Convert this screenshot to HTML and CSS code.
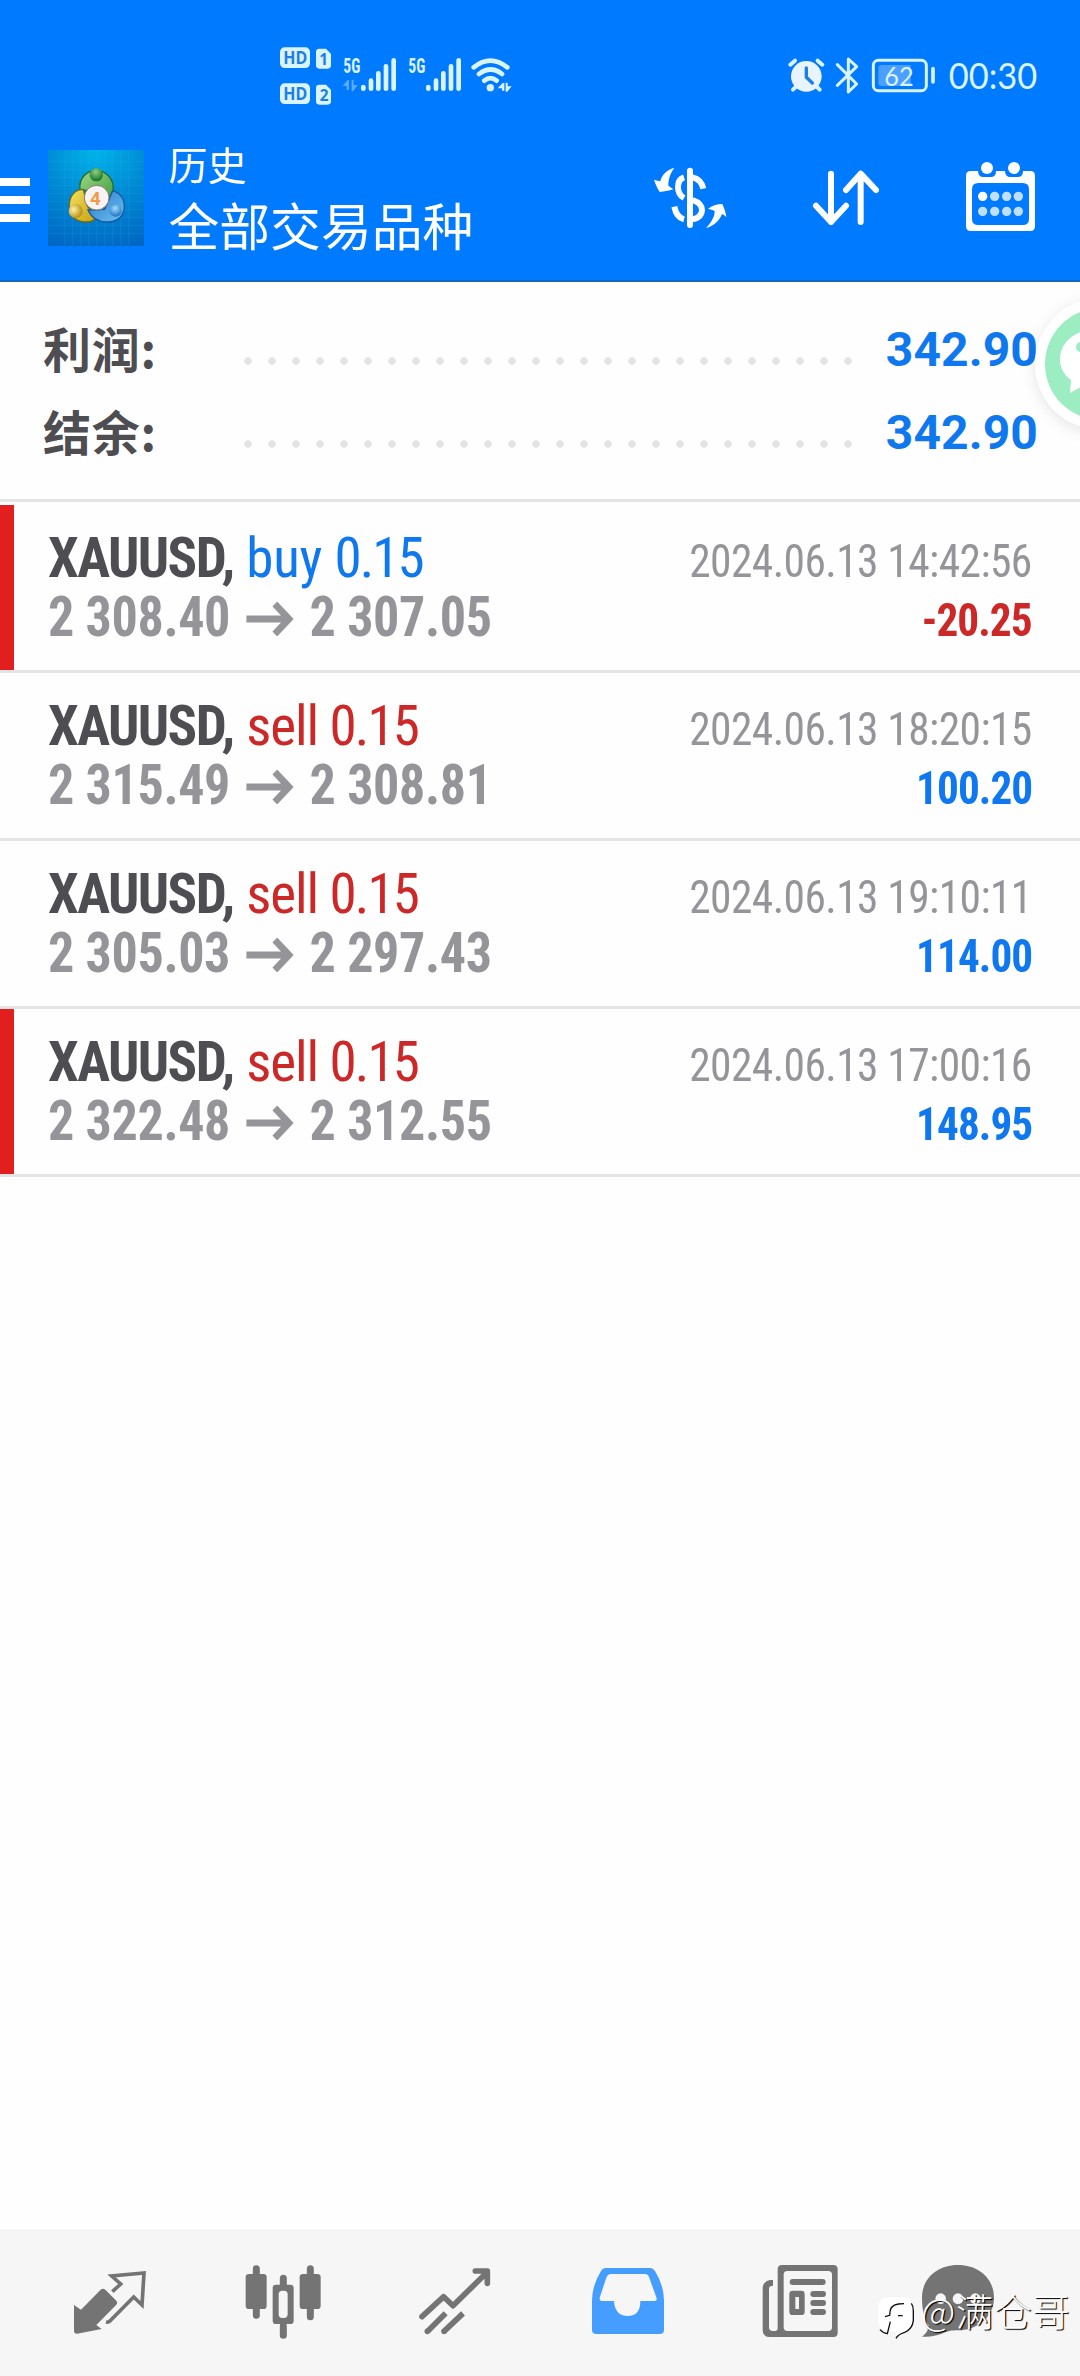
FILE: index.html
```html
<!DOCTYPE html>
<html lang="zh-CN">
<head>
<meta charset="utf-8">
<title>历史</title>
<link rel="stylesheet" href="styles.css">
</head>
<body>
<div class="screen">
  <header class="header">
    <div class="status">
      <svg class="status-left" viewBox="0 0 840 270" width="280" height="90">
        <g fill="#d9f3ff">
          <rect x="60" y="52" width="90" height="62" rx="14"/>
          <rect x="60" y="160" width="90" height="62" rx="14"/>
          <path d="M178 56h20l15 16v34q0 10-10 10h-25q-10 0-10-10V66q0-10 10-10z"/>
          <path d="M178 164h20l15 16v34q0 10-10 10h-25q-10 0-10-10v-40q0-10 10-10z"/>
        </g>
        <g class="hd" fill="#1b7fe6">
          <text x="70" y="103" textLength="72" lengthAdjust="spacingAndGlyphs">HD</text>
          <text x="70" y="211" textLength="72" lengthAdjust="spacingAndGlyphs">HD</text>
          <text class="sim" x="178" y="106">1</text>
          <text class="sim" x="179" y="213">2</text>
        </g>
        <g class="net" fill="#d9f3ff">
          <text x="250" y="128" textLength="51" lengthAdjust="spacingAndGlyphs">5G</text>
          <text x="445" y="128" textLength="51" lengthAdjust="spacingAndGlyphs">5G</text>
        </g>
        <path d="M248 168l15-18h4v30h-7v-12zM275 150h6v15h12l-14 19h-4z" fill="#5aaaff"/>
        <g stroke="#d9f3ff" stroke-width="14" stroke-linecap="round">
          <path d="M310 171v5M333 152v24M355 130v46M378 109v67M401 91v85"/>
          <path d="M505 171v5M528 152v24M550 130v46M573 109v67M596 91v85"/>
        </g>
        <g fill="none" stroke="#d9f3ff" stroke-width="14" stroke-linecap="round">
          <path d="M641 112q50-40 101 0M657 132q35-27 69 0M673 152q18-15 37 0"/>
        </g>
        <circle cx="691" cy="173" r="11" fill="#d9f3ff"/>
        <path d="M713 175l15-16h5v23h-7v-7zM737 158h6v11h12l-13 16h-5z" fill="#d9f3ff"/>
      </svg>
      <svg class="status-right" viewBox="0 0 930 210" width="310" height="70">
        <g stroke="#d9f3ff" fill="none" stroke-linecap="round">
          <path stroke-width="12" d="M61 74l14-12M157 74l-14-12M78 140l-9 9M140 140l9 9"/>
          <circle cx="109" cy="109" r="46" fill="#e8f4ff" stroke="none"/>
          <path d="M109 84v28l18 17" stroke="#1b7fe6" stroke-width="10" stroke-linejoin="round"/>
          <path stroke-width="9" stroke-linejoin="round" d="M202 74l58 58-25 24V57l25 23-58 56"/>
          <rect x="310" y="61" width="159" height="91" rx="15" stroke-width="9"/>
          <path stroke-width="11" d="M489 86v40"/>
        </g>
        <path d="M335 75h87v63h-87q-10 0-10-10V85q0-10 10-10z" fill="#4ba0ff"/>
        <text class="battery" x="343" y="137" textLength="88" lengthAdjust="spacingAndGlyphs">62</text>
        <text class="clock" x="536" y="148" textLength="266" lengthAdjust="spacingAndGlyphs">00:30</text>
      </svg>
    </div>
    <div class="toolbar">
      <div class="menu"><i></i><i></i><i></i></div>
      <svg class="app-icon" viewBox="144 60 288 288" width="96" height="96">
        <defs>
          <radialGradient id="sky" cx=".5" cy="0" r="1.05"><stop offset="0" stop-color="#00b4ea"/><stop offset=".5" stop-color="#008bd5"/><stop offset="1" stop-color="#0068c4"/></radialGradient>
          <linearGradient id="gr" x1="0" y1="0" x2="1" y2="1"><stop offset="0" stop-color="#a0d886"/><stop offset="1" stop-color="#3a9c3c"/></linearGradient>
          <linearGradient id="ye" x1="0" y1="0" x2="1" y2="1"><stop offset="0" stop-color="#f2e35c"/><stop offset="1" stop-color="#c8a010"/></linearGradient>
          <linearGradient id="bl" x1="0" y1="0" x2="1" y2="1"><stop offset="0" stop-color="#2c78c8"/><stop offset="1" stop-color="#6cc0f4"/></linearGradient>
          <radialGradient id="gb" cx=".45" cy=".3" r=".7"><stop offset="0" stop-color="#8fd07c"/><stop offset="1" stop-color="#13702b"/></radialGradient>
          <radialGradient id="yb" cx=".35" cy=".4" r=".7"><stop offset="0" stop-color="#fff0a0"/><stop offset="1" stop-color="#b08a08"/></radialGradient>
          <radialGradient id="bb" cx=".45" cy=".3" r=".7"><stop offset="0" stop-color="#9fdcff"/><stop offset="1" stop-color="#1c74c0"/></radialGradient>
        </defs>
        <path fill="url(#sky)" d="M144 60h288v288H144z"/>
        <path stroke="#35b5e6" stroke-opacity=".28" stroke-width="2" d="M194 60v288M218 60v288M242 60v288M266 60v288M290 60v288M314 60v288M338 60v288M362 60v288M386 60v288M144 94h288M144 118h288M144 142h288M144 166h288M144 190h288M144 214h288M144 238h288M144 262h288M144 286h288M144 310h288"/>
        <g stroke-width="4">
          <path d="M240 178c-4-34 20-56 48-56 30 0 54 24 52 58-2 22-10 32-22 38l-28-30z" fill="url(#gr)" stroke="#24662c"/>
          <path d="M250 178c-30 0-44 26-42 56 2 28 24 42 52 42 16 0 24-6 28-14l-26-34z" fill="url(#ye)" stroke="#6c6820"/>
          <path d="M338 182c28 8 38 32 34 56-4 26-26 38-50 38-28 0-48-14-58-36l50-2z" fill="url(#bl)" stroke="#155b9c"/>
        </g>
        <circle cx="289" cy="134" r="20" fill="url(#gb)"/>
        <circle cx="227" cy="243" r="21" fill="url(#yb)"/>
        <circle cx="347" cy="242" r="18" fill="url(#bb)"/>
        <circle cx="290" cy="203" r="37" fill="#f6f3f2" stroke="#83766d" stroke-width="3"/>
        <text class="four" x="270" y="224">4</text>
      </svg>
      <div class="titles">
        <div class="sub">历史</div>
        <div class="main">全部交易品种</div>
      </div>
      <svg class="actions" viewBox="0 0 1380 360" width="460" height="120">
        <g fill="none" stroke="#fff" stroke-linecap="round" stroke-linejoin="round">
          <path stroke-width="18" stroke-linecap="butt" d="M192 112q-18 6-18 28 0 24 18 34M163 200q6 32 29 38"/>
          <path stroke-width="18" stroke-linecap="butt" d="M218 112q26 6 32 34M218 180q28 10 28 30 0 22-28 28"/>
          <path stroke-width="18" d="M210 92v163"/>
          <path stroke-width="18" d="M633 101v145M588 197l45 49 45-49M722 246V101M678 150l44-49 46 49"/>
        </g>
        <path fill="#fff" d="M163 84c-18 2-38 20-42 40-5-1-12-3-19-5 4 12 9 24 17 37 13-1 27-3 41-8-5-4-10-8-15-11 0-16 4-36 18-53zM258 264c22-4 42-24 48-42 5 2 9 5 13 9-2-14-6-26-12-39-15 0-28 4-43 14 7 2 14 3 20 7 0 18-10 34-26 51z"/>
        <path fill="#fff" fill-rule="evenodd" d="M1052 93h22q1 18 16 18h22q16 0 16-18h27q1 18 16 18h22q16 0 16-18h22q14 0 14 14v152q0 14-14 14h-179q-14 0-14-14V107q0-14 14-14zM1075 129q-19 0-19 19v88q0 19 19 19h133q19 0 19-19v-88q0-19-19-19z"/>
        <g fill="#fff"><circle cx="1101" cy="84" r="18"/><circle cx="1182" cy="84" r="18"/><circle cx="1088" cy="169" r="14"/></g>
        <g fill="#bfdfff"><circle cx="1124" cy="169" r="14"/><circle cx="1160" cy="169" r="14"/><circle cx="1195" cy="169" r="14"/><circle cx="1088" cy="214" r="14"/><circle cx="1124" cy="214" r="14"/><circle cx="1160" cy="214" r="14"/><circle cx="1195" cy="214" r="14"/></g>
      </svg>
    </div>
  </header>

  <section class="summary">
    <div class="sum-row"><span class="label">利润:</span><span class="dots"></span><span class="value">342.90</span></div>
    <div class="sum-row"><span class="label">结余:</span><span class="dots"></span><span class="value">342.90</span></div>
  </section>

  <main class="deals">
    <article class="deal marked">
      <div class="line"><span class="name"><b>XAUUSD,</b> <span class="buy">buy <span class="lot">0.15</span></span></span><time>2024.06.13 14:42:56</time></div>
      <div class="line"><span class="price"><span>2 308.40</span><svg class="arrow" viewBox="0 0 48 34" width="51" height="34"><path d="M0 17h45M30 2l15 15-15 15"/></svg><span>2 307.05</span></span><span class="profit loss">-20.25</span></div>
    </article>
    <article class="deal">
      <div class="line"><span class="name"><b>XAUUSD,</b> <span class="sell">sell <span class="lot">0.15</span></span></span><time>2024.06.13 18:20:15</time></div>
      <div class="line"><span class="price"><span>2 315.49</span><svg class="arrow" viewBox="0 0 48 34" width="51" height="34"><path d="M0 17h45M30 2l15 15-15 15"/></svg><span>2 308.81</span></span><span class="profit">100.20</span></div>
    </article>
    <article class="deal">
      <div class="line"><span class="name"><b>XAUUSD,</b> <span class="sell">sell <span class="lot">0.15</span></span></span><time>2024.06.13 19:10:11</time></div>
      <div class="line"><span class="price"><span>2 305.03</span><svg class="arrow" viewBox="0 0 48 34" width="51" height="34"><path d="M0 17h45M30 2l15 15-15 15"/></svg><span>2 297.43</span></span><span class="profit">114.00</span></div>
    </article>
    <article class="deal marked">
      <div class="line"><span class="name"><b>XAUUSD,</b> <span class="sell">sell <span class="lot">0.15</span></span></span><time>2024.06.13 17:00:16</time></div>
      <div class="line"><span class="price"><span>2 322.48</span><svg class="arrow" viewBox="0 0 48 34" width="51" height="34"><path d="M0 17h45M30 2l15 15-15 15"/></svg><span>2 312.55</span></span><span class="profit">148.95</span></div>
    </article>
  </main>

  <nav class="tabs">
    <svg viewBox="90 120 240 240" width="80" height="80">
      <path fill="#747474" d="M102 255l21 14 59-60q7-5 14 0l33 33q5 6 0 12l-60 61 16 12-74 14q-9 0-9-9z"/>
      <path fill="none" stroke="#747474" stroke-width="11" d="M217 215l25-23-27-24 97-9-6 96-25-24-72 73q-6 3-11 2"/>
    </svg>
    <svg viewBox="604 120 240 240" width="80" height="80">
      <g fill="#747474"><rect x="612" y="162" width="63" height="105" rx="10"/><rect x="774" y="162" width="63" height="105" rx="10"/><path fill-rule="evenodd" d="M703 194h43q10 0 10 10v98q0 10-10 10h-43q-10 0-10-10v-98q0-10 10-10zM722 212q-11 0-11 11v60q0 11 11 11h5q11 0 11-11v-60q0-11-11-11z"/></g>
      <path stroke="#747474" stroke-width="21" stroke-linecap="round" d="M644 146v20M644 262v24M806 146v20M806 262v28M725 175v20M725 318v28"/>
    </svg>
    <svg viewBox="1121 120 240 240" width="80" height="80">
      <g fill="none" stroke="#747474" stroke-width="17" stroke-linejoin="round"><path stroke-linecap="round" d="M1142 290l65-60 28 27 100-98M1302 153h36v37"/><path d="M1159 334l54-54M1208 334l57-54"/></g>
      <g fill="#747474"><circle cx="1158" cy="334" r="8.5"/><circle cx="1208" cy="334" r="8.5"/></g>
    </svg>
    <svg viewBox="80 120 240 240" width="80" height="80">
      <path fill="#459dff" fill-rule="evenodd" d="M132 144h135q9 0 14 9 27 43 27 90v86q0 13-13 13H105q-13 0-13-13v-86q0-47 27-90 5-9 13-9zM148 162q-8 0-12 8l-20 60q-4 13 6 13h36q3 45 41 45t38-45h40q12 0 8-11l-22-61q-3-9-12-9z"/>
    </svg>
    <svg viewBox="600 120 240 240" width="80" height="80">
      <path fill="#747474" fill-rule="evenodd" d="M666 135h154q13 0 13 13v190q0 13-13 13H630q-22 0-22-22V206q0-22 22-26h9v17q-12 0-12 10v115q0 11 11 11h7q8 0 8-9V148q0-13 13-13zM682 153q-11 0-11 11v158q0 11 11 11h123q11 0 11-11V164q0-11-11-11z"/>
      <g stroke="#747474" stroke-linecap="round" stroke-width="18"><path d="M698 186h90M760 222h29M760 249h29M760 276h29"/></g>
      <path fill="#747474" fill-rule="evenodd" d="M698 212h26q10 0 10 10v53q0 10-10 10h-26q-10 0-10-10v-53q0-10 10-10zM706 231v36h11v-36z"/>
    </svg>
    <svg class="chat" viewBox="1074 120 240 240" width="80" height="80">
      <path fill="#747474" d="M1194 135c64 0 108 42 108 98 0 62-56 98-108 98-20 0-28 2-44 8-22 9-42 13-64 11 12-8 20-22 20-34-14-20-20-50-20-83 0-56 44-98 108-98z"/>
      <g fill="#f6f6f6"><circle cx="1142" cy="236" r="16"/><circle cx="1194" cy="236" r="16"/><circle cx="1246" cy="236" r="16"/></g>
    </svg>
  </nav>

  <svg class="bubble" viewBox="0 0 90 180" width="90" height="180">
    <circle class="disc" cx="111" cy="90" r="66" fill="#fff"/>
    <circle cx="111" cy="90" r="56" fill="#9cedc2"/>
    <path fill="#fff" d="M111 54c-23 0-41 13-41 31 0 9 4 16 11 21l-1 13 13-7c6 2 12 3 18 3z"/>
    <circle cx="91" cy="73" r="5" fill="#9cedc2"/>
  </svg>

  <div class="watermark">
    <svg viewBox="0 0 210 180" width="70" height="60">
      <path fill="#fff" d="M50 37h52q26 2 26 28v45q-2 26-24 32-18 4-28 15 0-10 6-18H52q-24-4-26-22V65q0-26 24-28z"/>
      <path fill="none" stroke="#111" stroke-width="4" d="M124 55q6 8 6 22v30q-3 26-26 35-20 6-26 18M30 134q8 10 22 12l9-36M45 95l14-4q-1-31 26-34l17-1M84 92h14"/>
    </svg>
    <span>@满仓哥</span>
  </div>
</div>
</body>
</html>
```
FILE: styles.css
```css
* { box-sizing: border-box; }
body { margin: 0; background: #fff; }
svg { display: block; flex: none; }

.screen {
  position: relative;
  display: flex;
  flex-direction: column;
  width: 1080px;
  height: 2376px;
  overflow: hidden;
  background: #fefefe;
  font-family: Roboto, "Noto Sans CJK SC", sans-serif;
}

/* header */
.header {
  height: 282px;
  background: #007aff;
  border-bottom: 2px solid #1468bd;
  color: #fff;
}
.status {
  display: flex;
  justify-content: space-between;
  height: 140px;
  padding: 30px 0 0 260px;
}
.status-right { margin-top: 10px; }
.hd text { font: 700 54px "Open Sans", sans-serif; }
.hd .sim { font-size: 46px; }
.net text { font: 700 62px "Roboto Condensed", Roboto, sans-serif; }
.battery { font: 400 80px Lato, sans-serif; fill: #d9f3ff; }
.clock { font: 400 112px Lato, sans-serif; fill: #d9f3ff; }
.toolbar { display: flex; height: 120px; }
.menu {
  display: flex;
  flex-direction: column;
  gap: 10px;
  width: 48px;
  padding-top: 38px;
}
.menu i { width: 30px; height: 8px; background: #fff; }
.app-icon { margin-top: 10px; }
.four { font: 700 56px Roboto, sans-serif; fill: #f29a4b; }
.titles { flex: 1; padding: 3px 0 0 24.5px; white-space: nowrap; }
.sub { font-size: 39px; line-height: 48px; }
.main { font-size: 50.8px; line-height: 76px; }

/* totals */
.summary {
  height: 220px;
  padding: 26px 42px 0 43px;
  border-bottom: 3px solid #e4e4e4;
}
.sum-row {
  display: flex;
  align-items: center;
  height: 83px;
  font-size: 48px;
  font-weight: 700;
}
.label {
  width: 193px;
  padding-bottom: 5px;
  font-family: "Noto Sans CJK SC", sans-serif;
  line-height: 60px;
  letter-spacing: .7px;
  color: #4d4d52;
}
.dots {
  width: 624px;
  height: 8px;
  margin-top: 23px;
  background: radial-gradient(circle, #e4e4e4 3.4px, transparent 4.2px) 0 0 / 24px 8px;
}
.value { flex: 1; text-align: right; color: #0f78ee; letter-spacing: .1px; }

/* deals */
.deals { flex: 1; padding-top: 3px; }
.deal {
  height: 168px;
  padding: 20px 48px 0;
  border-bottom: 3px solid #e4e4e4;
}
.deal.marked { background: linear-gradient(#e11f1f, #e11f1f) 0 0 / 14px 100% no-repeat; }
.line {
  display: flex;
  align-items: baseline;
  justify-content: space-between;
  height: 59px;
  line-height: 66px;
  font-family: "Roboto Condensed", Roboto, sans-serif;
  font-stretch: 75%;
  white-space: nowrap;
}
.name { font-size: 55px; }
.name b { color: #4d4d52; letter-spacing: -1.6px; }
.buy { color: #0f78ee; letter-spacing: -.3px; }
.sell { color: #cc2828; letter-spacing: -1.1px; }
.lot { letter-spacing: -1.9px; }
time {
  font-size: 45.5px;
  letter-spacing: -.6px;
  color: #959599;
  transform: scaleX(.955);
  transform-origin: right;
}
.price {
  display: flex;
  align-items: baseline;
  font-size: 55px;
  font-weight: 700;
  letter-spacing: -.4px;
  color: #959599;
  transform: scaleX(.947);
  transform-origin: left;
}
.arrow { margin: 0 17px 0 16px; fill: none; stroke: #959599; stroke-width: 7px; }
.profit {
  font-size: 45.5px;
  font-weight: 700;
  letter-spacing: -1px;
  color: #0f78ee;
  transform: scaleX(.95);
  transform-origin: right;
}
.profit.loss { color: #cc2828; }

/* bottom tabs */
.tabs {
  display: flex;
  gap: 92.5px;
  height: 147px;
  padding: 31px 0 0 70px;
  background: #f6f6f6;
}
.chat { margin-left: -14.5px; }

/* floating overlays */
.bubble { position: absolute; left: 990px; top: 274px; }
.disc { filter: drop-shadow(0 3px 7px rgba(0, 0, 0, .1)); }
.watermark {
  position: absolute;
  left: 870px;
  top: 2285px;
  display: flex;
  font: 300 37.6px/48px "Noto Sans CJK SC", sans-serif;
  letter-spacing: .6px;
  color: #fff;
  text-shadow: 1.2px 1.2px .8px #000;
  white-space: nowrap;
}
.watermark span { margin: 1px 0 0 -19px; }
```
